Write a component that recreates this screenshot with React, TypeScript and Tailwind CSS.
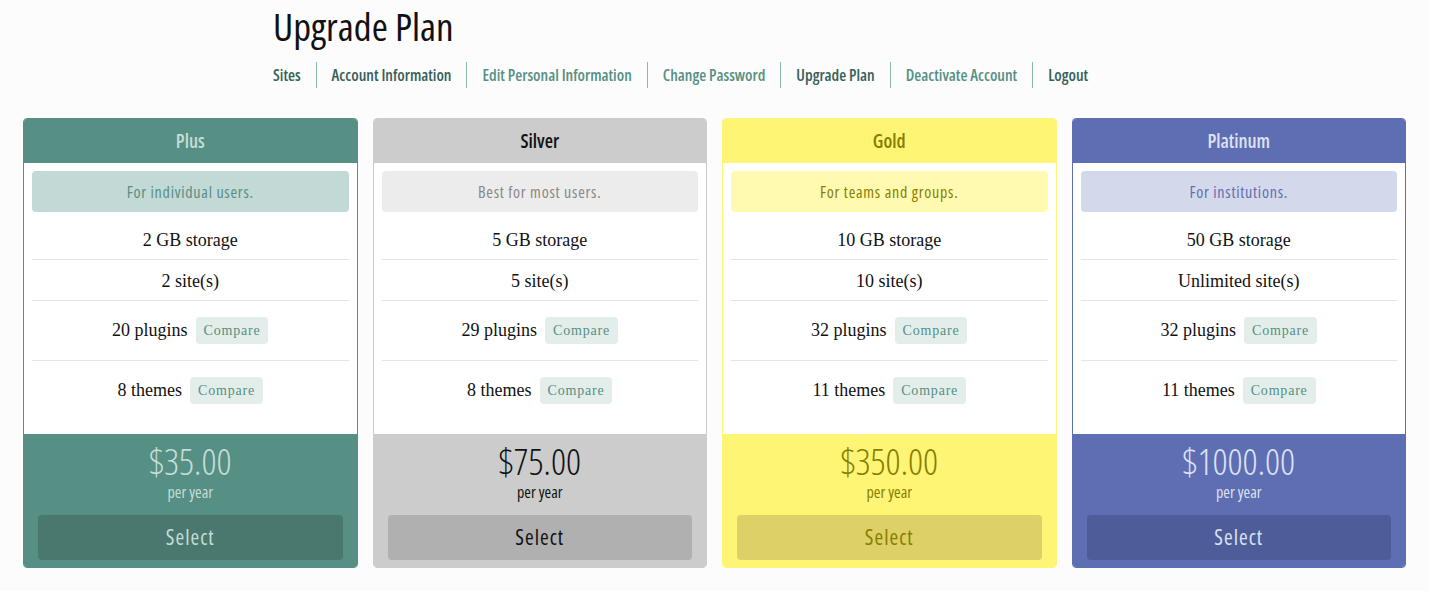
import React from "react";

type Plan = {
  name: string;
  tagline: string;
  storage: string;
  sites: string;
  plugins: number;
  themes: number;
  price: string;
  border: string;
  head: string;
  headText: string;
  tagBg: string;
  tagText: string;
  btn: string;
};

const plans: Plan[] = [
  {
    name: "Plus",
    tagline: "For individual users.",
    storage: "2 GB storage",
    sites: "2 site(s)",
    plugins: 20,
    themes: 8,
    price: "$35.00",
    border: "border-[#568f83]",
    head: "bg-[#568f83]",
    headText: "text-[#c5ddd8]",
    tagBg: "bg-[#c3d9d5]",
    tagText: "text-[#568f83]",
    btn: "bg-[#4a786f]",
  },
  {
    name: "Silver",
    tagline: "Best for most users.",
    storage: "5 GB storage",
    sites: "5 site(s)",
    plugins: 29,
    themes: 8,
    price: "$75.00",
    border: "border-[#cccccc]",
    head: "bg-[#cccccc]",
    headText: "text-[#111111]",
    tagBg: "bg-[#ececec]",
    tagText: "text-[#888888]",
    btn: "bg-[#b0b0b0]",
  },
  {
    name: "Gold",
    tagline: "For teams and groups.",
    storage: "10 GB storage",
    sites: "10 site(s)",
    plugins: 32,
    themes: 11,
    price: "$350.00",
    border: "border-[#fff575]",
    head: "bg-[#fff575]",
    headText: "text-[#877e00]",
    tagBg: "bg-[#fffab0]",
    tagText: "text-[#877e00]",
    btn: "bg-[#ddd066]",
  },
  {
    name: "Platinum",
    tagline: "For institutions.",
    storage: "50 GB storage",
    sites: "Unlimited site(s)",
    plugins: 32,
    themes: 11,
    price: "$1000.00",
    border: "border-[#5e6eb3]",
    head: "bg-[#5e6eb3]",
    headText: "text-[#dde1f1]",
    tagBg: "bg-[#d3d9ea]",
    tagText: "text-[#5e6eb3]",
    btn: "bg-[#4e5d99]",
  },
];

const navItems = [
  { name: "Sites", dark: true },
  { name: "Account Information", dark: true },
  { name: "Edit Personal Information", dark: false },
  { name: "Change Password", dark: false },
  { name: "Upgrade Plan", dark: true },
  { name: "Deactivate Account", dark: false },
  { name: "Logout", dark: true },
];

// condensed sans stands in for the narrow display face
const narrow = "font-['Open_Sans',sans-serif] font-stretch-condensed";
const serif = "font-['Liberation_Serif','DejaVu_Serif',serif]";

function CompareRow({ label, last }: { label: string; last?: boolean }) {
  return (
    <div
      className={`flex items-center justify-center gap-2 py-4 ${
        last ? "" : "border-b border-[#e5e5e5]"
      }`}
    >
      <span className="text-[18px] text-[#111]">{label}</span>
      <button
        type="button"
        className="h-[27px] px-[8px] rounded-sm bg-[#e3eeea] text-[14px] tracking-[0.8px] text-[#568f83]"
      >
        Compare
      </button>
    </div>
  );
}

function PlanCard({ plan }: { plan: Plan }) {
  return (
    <div className={`flex flex-col border rounded-sm overflow-hidden ${plan.border}`}>
      <div
        className={`h-[44px] flex items-center justify-center text-[19px] font-semibold ${narrow} ${plan.head} ${plan.headText}`}
      >
        {plan.name}
      </div>

      <div className={`bg-white px-2 pt-2 pb-[14px] ${serif}`}>
        <div
          className={`h-[41px] mb-[7px] rounded-sm flex items-center justify-center text-[16px] tracking-[0.75px] ${narrow} ${plan.tagBg} ${plan.tagText}`}
        >
          {plan.tagline}
        </div>
        <div className="h-[41px] flex items-center justify-center border-b border-[#e5e5e5] text-[18px] text-[#111] pt-[2px]">
          {plan.storage}
        </div>
        <div className="h-[41px] flex items-center justify-center border-b border-[#e5e5e5] text-[18px] text-[#111] pt-[2px]">
          {plan.sites}
        </div>
        <CompareRow label={`${plan.plugins} plugins`} />
        <CompareRow label={`${plan.themes} themes`} last />
      </div>

      <div className={`flex-1 flex flex-col items-center px-[14px] pt-[5px] pb-[7px] ${narrow} ${plan.head} ${plan.headText}`}>
        <div className="text-[37px] leading-[44px] font-light">{plan.price}</div>
        <div className="text-[16px] leading-[18px]">per year</div>
        <button
          type="button"
          className={`mt-[14px] w-full h-[45px] rounded-sm text-[21px] tracking-[1px] ${plan.btn}`}
        >
          Select
        </button>
      </div>
    </div>
  );
}

export default function App() {
  return (
    <div className="min-h-[591px] bg-[#fcfcfc] pb-6">
      <div className="pl-[273px]">
        <h1 className={`text-[39px] leading-[52px] text-[#111] ${narrow}`}>Upgrade Plan</h1>
        <nav className={`flex items-center mt-[10px] ${narrow}`}>
          {navItems.map((item, i) => (
            <div key={item.name} className="flex items-center">
              {i > 0 && <span className="w-px h-[26px] bg-[#8ab8af] mx-[15px]" />}
              <a
                href="#"
                className={`text-[16px] font-semibold ${
                  item.dark ? "text-[#37605a]" : "text-[#579085]"
                }`}
              >
                {item.name}
              </a>
            </div>
          ))}
        </nav>
      </div>

      <div className="grid grid-cols-4 gap-[15px] px-[23px] mt-[30px]">
        {plans.map((plan) => (
          <PlanCard key={plan.name} plan={plan} />
        ))}
      </div>
    </div>
  );
}
